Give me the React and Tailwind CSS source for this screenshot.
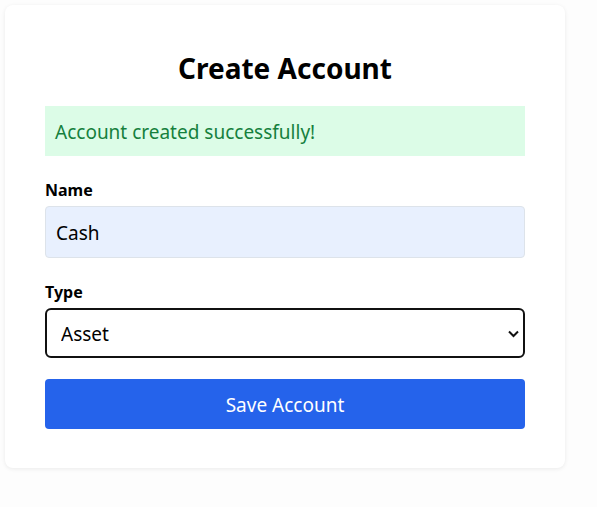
import React, { useState } from "react";

const App = () => {
  const [name, setName] = useState("Cash");
  const [type, setType] = useState("Asset");

  return (
    <div
      className="min-h-[507px] bg-[#fdfdfd] p-[5px]"
      style={{ fontFamily: '"Noto Sans", "Open Sans", sans-serif' }}
    >
      <div className="w-[560px] bg-white rounded-lg shadow-[0_1px_4px_rgba(0,0,0,0.08)] px-10 pt-[42px] pb-[39px]">
        {/* Title */}
        <h1 className="text-[28px] leading-[42px] font-bold text-black text-center mb-[17px]">
          Create Account
        </h1>

        {/* Success alert */}
        <div className="h-[50px] flex items-center px-2.5 pt-0.5 bg-[#dcfce7] text-[#15803d] text-[19px] mb-[22px]">
          Account created successfully!
        </div>

        {/* Name */}
        <label className="block text-base font-bold text-black leading-6 mb-1">Name</label>
        <input
          value={name}
          onChange={(e) => setName(e.target.value)}
          className="w-full h-[52px] px-2.5 pt-0.5 text-[19px] text-black bg-[#e8f0fe] border border-[#dde3ea] rounded outline-none mb-[22px]"
        />

        {/* Type */}
        <label className="block text-base font-bold text-black leading-6 mb-1">Type</label>
        <div className="relative mb-[21px]">
          <select
            value={type}
            onChange={(e) => setType(e.target.value)}
            className="w-full h-[50px] px-3.5 pt-0.5 text-[19px] text-black bg-white border-2 border-[#111] rounded-md appearance-none outline-none"
          >
            <option>Asset</option>
            <option>Liability</option>
            <option>Equity</option>
            <option>Income</option>
            <option>Expense</option>
          </select>
          <svg
            className="absolute right-[6px] top-[22px] pointer-events-none"
            width="11"
            height="8"
            viewBox="0 0 11 8"
          >
            <path d="M1 1.5 L5.5 6 L10 1.5" fill="none" stroke="#111" strokeWidth="2" />
          </svg>
        </div>

        {/* Submit */}
        <button className="w-full h-[50px] pt-0.5 bg-[#2563eb] text-white text-[19px] rounded">
          Save Account
        </button>
      </div>
    </div>
  );
};

export default App;
